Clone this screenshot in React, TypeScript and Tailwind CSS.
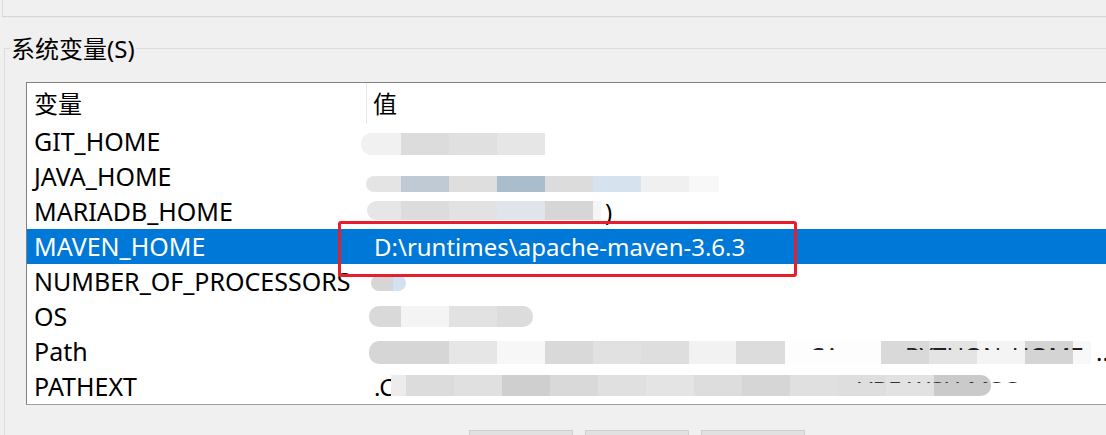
import React from 'react';

type Tile = [number, string];

interface BlobProps {
  tiles: Tile[];
  ml: number;
  mt: number;
  h: number;
  round?: 'both' | 'left' | 'right';
}

// privacy mosaic that hides a value
function Blob({ tiles, ml, mt, h, round = 'both' }: BlobProps) {
  const r =
    round === 'both' ? 'rounded-[10px]' : round === 'left' ? 'rounded-l-[10px]' : 'rounded-r-[10px]';
  return (
    <div className={`flex shrink-0 self-start overflow-hidden ${r}`} style={{ marginLeft: ml, marginTop: mt, height: h }}>
      {tiles.map(([w, c], i) => (
        <div key={i} className="h-full shrink-0" style={{ width: w, backgroundColor: c }} />
      ))}
    </div>
  );
}

const rows: { name: string; value: React.ReactNode; selected?: boolean }[] = [
  {
    name: 'GIT_HOME',
    value: (
      <Blob
        ml={-7}
        mt={9}
        h={22}
        round="left"
        tiles={[[40, '#f1f1f1'], [48, '#dcdcdc'], [48, '#e0e0e0'], [48, '#e6e6e6']]}
      />
    ),
  },
  {
    name: 'JAVA_HOME',
    value: (
      <Blob
        ml={-2}
        mt={17}
        h={16}
        round="left"
        tiles={[[35, '#e4e4e4'], [48, '#bfcad4'], [48, '#dedede'], [48, '#a9bdcc'], [48, '#dcdcdc'], [48, '#d6e3ee'], [48, '#f0f0f0'], [30, '#f8f8f8']]}
      />
    ),
  },
  {
    name: 'MARIADB_HOME',
    value: (
      <>
        <Blob
          ml={-1}
          mt={7}
          h={19}
          round="left"
          tiles={[[34, '#e6e6e6'], [48, '#dcdcdc'], [48, '#e2e2e2'], [48, '#dfe5eb'], [48, '#d6d6d6'], [8, '#f5f5f5']]}
        />
        <span className="ml-[4px] self-center">)</span>
      </>
    ),
  },
  {
    name: 'MAVEN_HOME',
    selected: true,
    value: <span className="ml-[6px] self-center text-[24px] text-white">D:\runtimes\apache-maven-3.6.3</span>,
  },
  {
    name: 'NUMBER_OF_PROCESSORS',
    value: <Blob ml={3} mt={11} h={16} tiles={[[22, '#d6d6d6'], [13, '#d3e2f0']]} />,
  },
  {
    name: 'OS',
    value: <Blob ml={1} mt={7} h={21} tiles={[[32, '#d9d9d9'], [48, '#f4f4f4'], [48, '#e2e2e2'], [36, '#dcdcdc']]} />,
  },
  {
    name: 'Path',
    value: (
      <>
        <Blob
          ml={1}
          mt={7}
          h={23}
          round="left"
          tiles={[
            [80, '#d6d6d6'], [48, '#e6e6e6'], [48, '#f7f7f7'], [48, '#d9d9d9'], [48, '#e1e1e1'], [48, '#dedede'],
            [47, '#f2f2f2'], [49, '#dcdcdc'], [96, '#fdfdfd'], [48, '#d9d9d9'], [48, '#e4e4e4'], [48, '#f4f4f4'],
            [48, '#d4d4d4'], [18, '#f8f8f8'],
          ]}
        />
        <span className="ml-[5px] self-center">..</span>
        <div className="absolute left-[441px] top-[7px] h-[9px] overflow-hidden leading-[30px] text-[#222]">CA</div>
        <div className="absolute left-[537px] top-[7px] h-[9px] overflow-hidden leading-[30px] text-[#222]">PYTHON_HOME</div>
      </>
    ),
  },
  {
    name: 'PATHEXT',
    value: (
      <>
        <span className="ml-[6px] self-center">.C</span>
        <Blob
          ml={-3}
          mt={6}
          h={21}
          round="right"
          tiles={[
            [15, '#ececec'], [48, '#dcdcdc'], [48, '#e0e0e0'], [48, '#cfcfcf'], [48, '#d9d9d9'], [48, '#e0e0e0'],
            [48, '#e4e4e4'], [48, '#dddddd'], [48, '#d6d6d6'], [48, '#e0e0e0'], [48, '#dedede'], [48, '#e2e2e2'],
            [57, '#cacaca'],
          ]}
        />
        <div className="absolute left-[490px] top-[6px] h-[8px] overflow-hidden leading-[30px] text-[#333]">VBE;WSH;MSC</div>
      </>
    ),
  },
];

export default function App() {
  return (
    <div className="relative h-[435px] w-[1106px] overflow-hidden bg-[#f0f0f0] font-['Noto_Sans','Noto_Sans_CJK_SC',sans-serif] text-[24px] text-black">
      {/* user variables box (bottom edge only) */}
      <div className="ml-[2px] h-[17px] border-b border-l border-b-[#d6d6d6] border-l-[#dcdcdc] shadow-[0_1px_0_#e9e9e9]" />

      {/* system variables group */}
      <div className="ml-[4px] mt-[31px] h-[400px] border-l border-t border-[#dcdcdc]">
        <div className="-mt-[14px] ml-[5px] w-fit bg-[#f0f0f0] px-[1px] leading-[28px]">系统变量(S)</div>

        <div className="ml-[21px] mt-[19px] w-[1200px] border border-[#828282] border-b-[#a0a0a0] bg-white">
          <div className="flex h-[41px]">
            <div className="w-[340px] border-r border-[#e5e5e5] pl-[7px] pt-[6px] leading-[30px]">变量</div>
            <div className="pl-[6px] pt-[6px] leading-[30px]">值</div>
          </div>
          {rows.map((r) => (
            <div key={r.name} className={`flex h-[35px] ${r.selected ? 'bg-[#0078d7] text-white' : ''}`}>
              <div className="flex w-[341px] shrink-0 items-center pl-[7px] text-[25px]">{r.name}</div>
              <div className="relative flex flex-1">{r.value}</div>
            </div>
          ))}
        </div>

        <div className="ml-[464px] mt-[25px] flex gap-[12px]">
          <div className="h-[30px] w-[104px] border border-[#cfcfcf] bg-[#e1e1e1]" />
          <div className="h-[30px] w-[104px] border border-[#cfcfcf] bg-[#e1e1e1]" />
          <div className="h-[30px] w-[104px] border border-[#cfcfcf] bg-[#e1e1e1]" />
        </div>
      </div>

      {/* highlight frame */}
      <div className="absolute left-[338px] top-[221px] h-[56px] w-[459px] rounded-[3px] border-[3px] border-[#e81f2b]" />
    </div>
  );
}
